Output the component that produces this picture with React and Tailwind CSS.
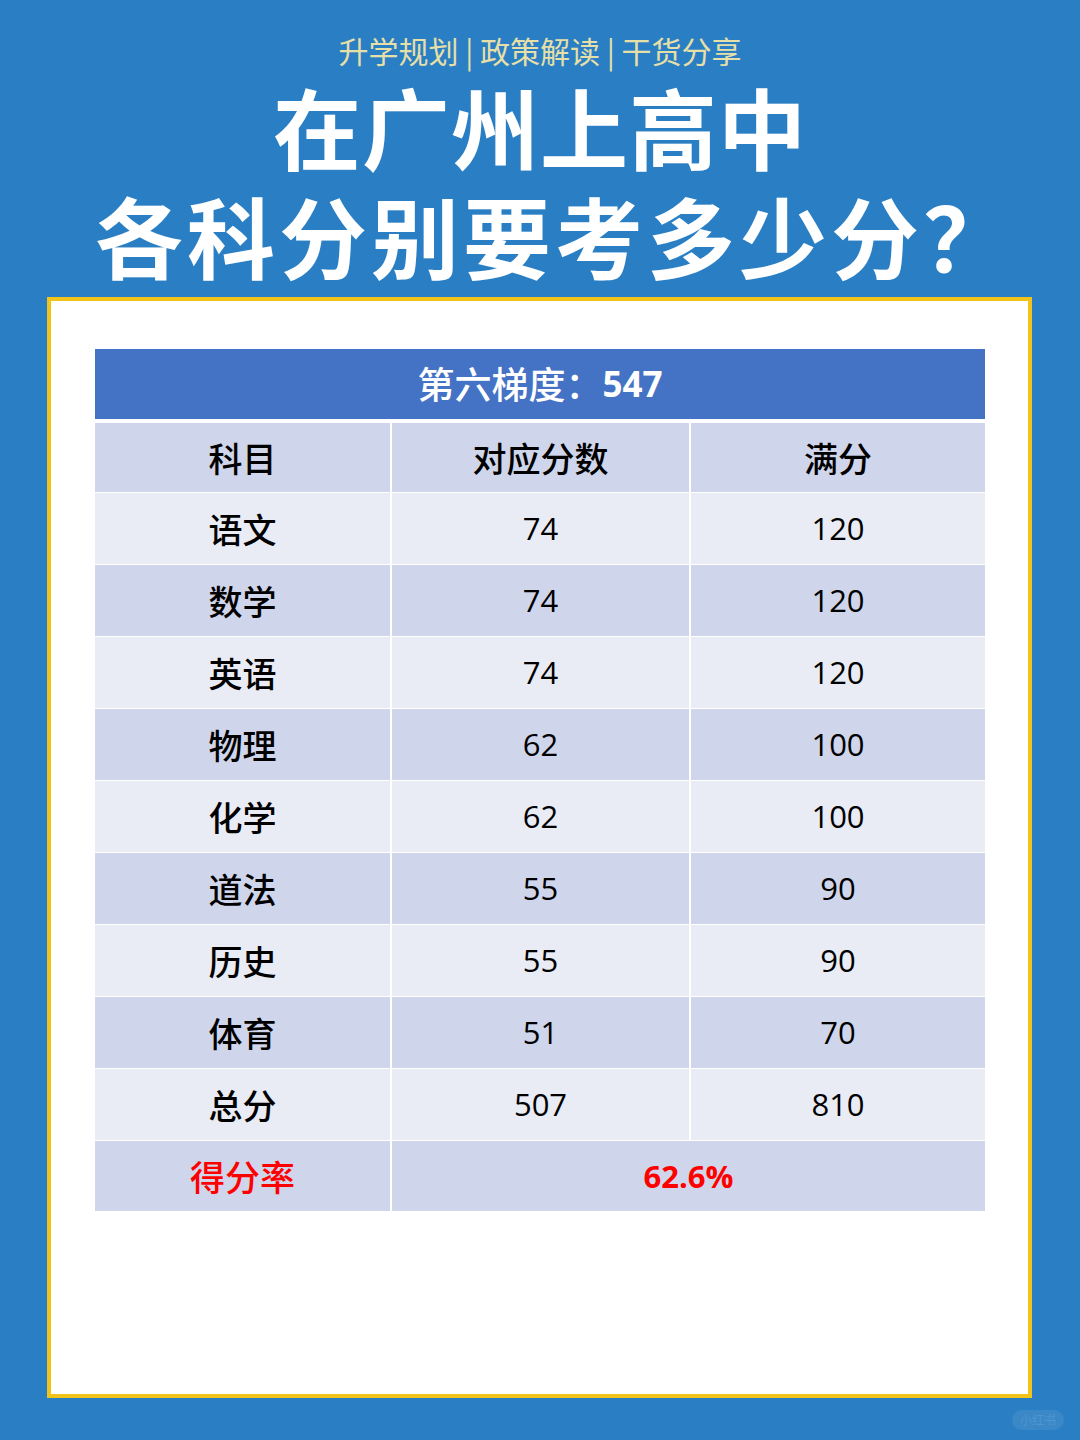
import React from "react";

const rows = [
  ["语文", "74", "120"],
  ["数学", "74", "120"],
  ["英语", "74", "120"],
  ["物理", "62", "100"],
  ["化学", "62", "100"],
  ["道法", "55", "90"],
  ["历史", "55", "90"],
  ["体育", "51", "70"],
  ["总分", "507", "810"],
];

const cjk = { fontFamily: '"Noto Sans CJK SC", "Noto Sans", sans-serif' };
const num = { fontFamily: '"Open Sans", "Noto Sans CJK SC", sans-serif' };

export default function App() {
  return (
    <div className="w-[1080px] h-[1440px] bg-[#2a7fc4] flex flex-col items-center overflow-hidden relative" style={cjk}>
      <div className="mt-[28px] h-[44px] text-[30px] leading-[44px] text-[#e6dfa8]">
        升学规划 | 政策解读 | 干货分享
      </div>
      <div className="h-[106px] text-[88px] leading-[106px] font-bold text-white tracking-[1px]">
        在广州上高中
      </div>
      <div className="h-[112px] text-[88px] leading-[112px] font-bold text-white tracking-[4px] ml-[30px]">
        各科分别要考多少分？
      </div>
      <div className="mt-[7px] ml-[-1px] w-[985px] h-[1101px] bg-white border-[4px] border-[#f2c318] pt-[48px] pl-[44px]">
        <div className="w-[890px]">
          <div className="h-[70px] bg-[#4472c4] flex items-center justify-center text-white text-[37px] font-medium">
            第六梯度：<span className="font-bold text-[35px]" style={num}>547</span>
          </div>
          <div className="mt-[4px] grid grid-cols-[295px_297px_294px] gap-x-[2px] bg-white">
            <div className="h-[69px] bg-[#cfd5ea] flex items-center justify-center text-[34px] font-medium text-black">科目</div>
            <div className="h-[69px] bg-[#cfd5ea] flex items-center justify-center text-[34px] font-medium text-black">对应分数</div>
            <div className="h-[69px] bg-[#cfd5ea] flex items-center justify-center text-[34px] font-medium text-black">满分</div>
          </div>
          {rows.map((r, i) => {
            const bg = i % 2 === 0 ? "bg-[#e9ebf5]" : "bg-[#cfd5ea]";
            return (
              <div key={i} className="mt-[1px] grid grid-cols-[295px_297px_294px] gap-x-[2px] bg-white">
                <div className={`h-[71px] ${bg} flex items-center justify-center text-[34px] font-medium text-black`}>{r[0]}</div>
                <div className={`h-[71px] ${bg} flex items-center justify-center text-[31px] text-black`} style={num}>{r[1]}</div>
                <div className={`h-[71px] ${bg} flex items-center justify-center text-[31px] text-black`} style={num}>{r[2]}</div>
              </div>
            );
          })}
          <div className="mt-[1px] grid grid-cols-[295px_593px] gap-x-[2px] bg-white">
            <div className="h-[70px] bg-[#cfd5ea] flex items-center justify-center text-[35px] font-medium text-[#ff0000]">得分率</div>
            <div className="h-[70px] bg-[#cfd5ea] flex items-center justify-center text-[31px] font-bold text-[#ff0000]" style={num}>62.6%</div>
          </div>
        </div>
      </div>
      <div className="absolute right-[16px] bottom-[10px] px-[8px] h-[20px] rounded-full bg-[#3a88c8] text-[12px] leading-[20px] text-[#4f95cf]">小红书</div>
    </div>
  );
}
